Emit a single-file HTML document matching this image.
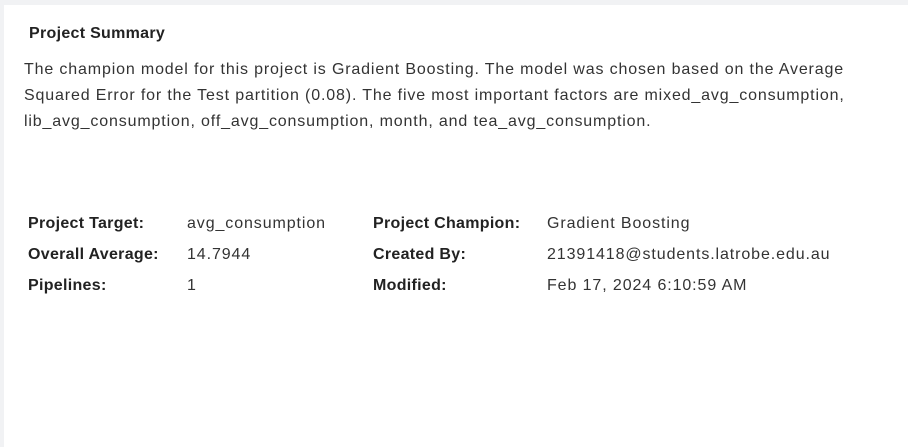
<!DOCTYPE html>
<html><head><style>
body{margin:0;width:908px;height:447px;background:#f1f2f4;overflow:hidden;font-family:"Liberation Sans",sans-serif;color:#2b2b2b}
.p{position:absolute;left:4px;top:5px;width:904px;height:442px;background:#fff}
.t{position:absolute;left:29px;top:25px;font-size:16px;font-weight:bold;color:#222;letter-spacing:0.3px}
.d{position:absolute;left:24px;top:57px;width:880px;font-size:16px;line-height:26px;color:#333;letter-spacing:0.85px;white-space:nowrap}
.r{position:absolute;font-size:16px;color:#333;letter-spacing:0.9px;white-space:nowrap}
.b{font-weight:bold;color:#222;letter-spacing:0.3px}
</style></head><body><div class="p"></div>
<div class="t">Project Summary</div>
<div class="d">The champion model for this project is Gradient Boosting. The model was chosen based on the Average<br>Squared Error for the Test partition (0.08). The five most important factors are mixed_avg_consumption,<br>lib_avg_consumption, off_avg_consumption, month, and tea_avg_consumption.</div>
<div class="r b" style="left:28px;top:215px">Project Target:</div>
<div class="r" style="left:187px;top:215px">avg_consumption</div>
<div class="r b" style="left:28px;top:246px">Overall Average:</div>
<div class="r" style="left:187px;top:246px">14.7944</div>
<div class="r b" style="left:28px;top:277px">Pipelines:</div>
<div class="r" style="left:187px;top:277px">1</div>
<div class="r b" style="left:373px;top:215px">Project Champion:</div>
<div class="r" style="left:547px;top:215px">Gradient Boosting</div>
<div class="r b" style="left:373px;top:246px">Created By:</div>
<div class="r" style="left:547px;top:246px">21391418@students.latrobe.edu.au</div>
<div class="r b" style="left:373px;top:277px">Modified:</div>
<div class="r" style="left:547px;top:277px">Feb 17, 2024 6:10:59 AM</div>
</body></html>
